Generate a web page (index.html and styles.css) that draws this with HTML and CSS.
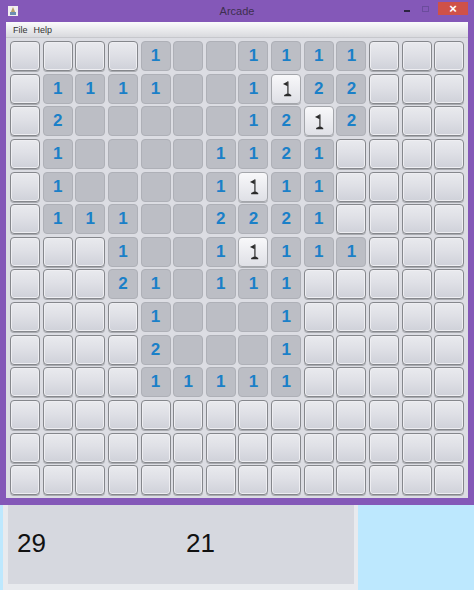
FILE: index.html
```html
<!DOCTYPE html>
<html lang="en">
<head>
    <meta charset="UTF-8">
    <title>Arcade</title>
    <link rel="stylesheet" href="styles.css">
</head>
<body>
    <div class="window">
        <div class="title-bar">
            <svg class="app-icon" viewBox="0 0 10 10">
                <rect width="10" height="10" fill="#f2eef0"/>
                <path d="M5 1 L8 8 H2 Z" fill="#b9a06a"/>
                <rect x="2" y="6" width="6" height="3" fill="#6f8fb0"/>
            </svg>
            <span class="title">Arcade</span>
            <div class="controls">
                <span class="minimize"></span>
                <span class="maximize"></span>
                <span class="close">&#215;</span>
            </div>
        </div>
        <div class="content">
            <div class="menu-bar">
                <span>File</span>
                <span>Help</span>
            </div>
            <div class="board" id="board"></div>
        </div>
    </div>
    <div class="scores">
        <span>29</span>
        <span>21</span>
    </div>
    <script src="script.js"></script>
</body>
</html>
```

FILE: styles.css
```css
* {
    margin: 0;
    padding: 0;
    box-sizing: border-box;
}

body {
    width: 474px;
    height: 590px;
    overflow: hidden;
    background-color: #bde8fe;
    font-family: "Liberation Sans", Arial, sans-serif;
}

.window {
    height: 505px;
    padding: 0 6px 7px;
    background-color: #8458b8;
    display: flex;
    flex-direction: column;
}

.title-bar {
    height: 22px;
    flex-shrink: 0;
    position: relative;
    display: flex;
    align-items: center;
    justify-content: center;
}

.app-icon {
    position: absolute;
    left: 2px;
    top: 6px;
    width: 10px;
    height: 10px;
}

.title {
    font-size: 11px;
    color: #3d2f4f;
}

.controls {
    position: absolute;
    right: 0;
    top: 2px;
    display: flex;
    align-items: flex-start;
}

.minimize {
    width: 6px;
    height: 2px;
    margin: 8px 12px 0 0;
    background-color: #2b2340;
}

.maximize {
    width: 7px;
    height: 6px;
    margin: 4px 9px 0 0;
    border: 1px solid #6b4c9c;
}

.close {
    width: 30px;
    height: 13px;
    background-color: #cf5148;
    color: #fff;
    font-size: 13px;
    font-weight: bold;
    line-height: 13px;
    text-align: center;
}

.content {
    flex: 1;
    background-color: #dcdde3;
}

.menu-bar {
    height: 16px;
    padding-left: 7px;
    display: flex;
    gap: 6px;
    align-items: center;
    font-size: 9px;
    color: #333;
    background: linear-gradient(to bottom, #fbfbfc 0%, #d9dade 100%);
    border-bottom: 1px solid #c6c7cc;
}

.board {
    display: grid;
    grid-template-columns: repeat(14, 30px);
    grid-auto-rows: 30px;
    gap: 2.65px;
    padding: 3px 0 0 4px;
}

.cell {
    border-radius: 4px;
    display: flex;
    align-items: center;
    justify-content: center;
    font-size: 17px;
    font-weight: bold;
    color: #1a80c8;
}

.raised {
    background: linear-gradient(to bottom, #e9eaee 0%, #dfe0e6 45%, #cfd1d9 100%);
    border: 1px solid #85878c;
    box-shadow: inset 0 0 0 1px #eeeef2, 0 1px 0 #a9abb0;
}

.open {
    background-color: #bcbec5;
    border: 1px solid #aeb0b7;
}

.flag {
    background: linear-gradient(to bottom, #f8f8fa 0%, #dfe0e6 100%);
    border: 1px solid #a4a6ab;
    box-shadow: 0 1px 0 #a9abb0;
}

.flag svg {
    width: 13px;
    height: 19px;
}

.scores {
    width: 355px;
    height: 85px;
    margin-left: 3px;
    padding: 0 0 2px 9px;
    background-color: #d6d8df;
    border-left: 5px solid #e8eaee;
    border-right: 4px solid #e8eaee;
    border-bottom: 6px solid #e8eaee;
    display: grid;
    grid-template-columns: 169px 100px;
    align-items: center;
    font-size: 26px;
    color: #111;
}
```

FILE: script.js
```js
// r = raised, . = opened empty, f = flag, digits = opened with number
const rows = [
    'rrrr1..1111rrr',
    'r1111..1f22rrr',
    'r2.....12f2rrr',
    'r1....1121rrrr',
    'r1....1f11rrrr',
    'r111..2221rrrr',
    'rrr1..1f111rrr',
    'rrr21.111rrrrr',
    'rrrr1...1rrrrr',
    'rrrr2...1rrrrr',
    'rrrr11111rrrrr',
    'rrrrrrrrrrrrrr',
    'rrrrrrrrrrrrrr',
    'rrrrrrrrrrrrrr'
];

const flagIcon = '<svg viewBox="0 0 11 16"><path d="M6.5 2 L2.5 4.2 L6.5 6 Z" fill="#2a2a2a"/>' +
    '<rect x="6.2" y="2" width="1" height="10.5" fill="#2a2a2a"/>' +
    '<path d="M3.5 14.5 V13.5 L6 12.3 H7.5 L9.5 13.5 V14.5 Z" fill="#2a2a2a"/></svg>';

const board = document.getElementById('board');

rows.forEach((row) => {
    for (const ch of row) {
        const cell = document.createElement('div');
        cell.classList.add('cell');

        if (ch === 'r') {
            cell.classList.add('raised');
        } else if (ch === 'f') {
            cell.classList.add('flag');
            cell.innerHTML = flagIcon;
        } else {
            cell.classList.add('open');
            if (ch !== '.') cell.textContent = ch;
        }

        board.appendChild(cell);
    }
});
```
